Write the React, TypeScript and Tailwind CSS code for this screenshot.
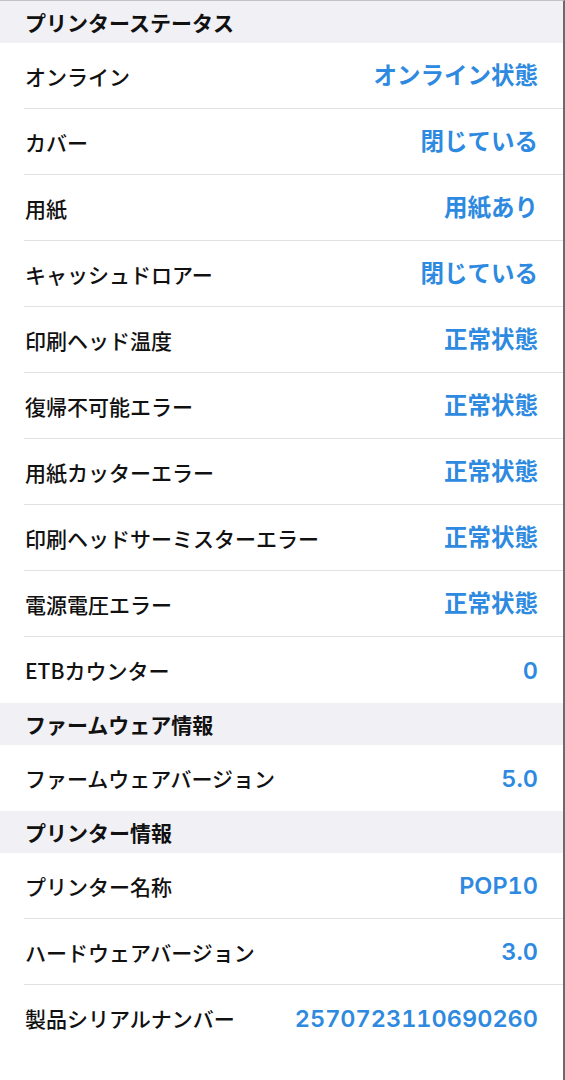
const sections: { title: string; rows: [string, string][] }[] = [
  {
    title: 'プリンターステータス',
    rows: [
      ['オンライン', 'オンライン状態'],
      ['カバー', '閉じている'],
      ['用紙', '用紙あり'],
      ['キャッシュドロアー', '閉じている'],
      ['印刷ヘッド温度', '正常状態'],
      ['復帰不可能エラー', '正常状態'],
      ['用紙カッターエラー', '正常状態'],
      ['印刷ヘッドサーミスターエラー', '正常状態'],
      ['電源電圧エラー', '正常状態'],
      ['ETBカウンター', '0'],
    ],
  },
  {
    title: 'ファームウェア情報',
    rows: [['ファームウェアバージョン', '5.0']],
  },
  {
    title: 'プリンター情報',
    rows: [
      ['プリンター名称', 'POP10'],
      ['ハードウェアバージョン', '3.0'],
      ['製品シリアルナンバー', '2570723110690260'],
    ],
  },
];

export default function App() {
  return (
    <div className="w-[565px] h-[1080px] bg-white border-t border-t-[#c4c4c8] border-r-2 border-r-[#6b6b6b] overflow-hidden font-['Noto_Sans_CJK_JP',sans-serif] text-[#111]">
      {sections.map(s => (
        <div key={s.title}>
          <div className="h-[42px] bg-[#f0f0f5] flex items-center pl-[25px] text-[21px] font-bold leading-none">
            {s.title}
          </div>
          {s.rows.map(([label, value], i) => (
            <div key={label} className="pl-[24px] bg-white">
              <div className={'h-[66px] flex items-center justify-between pr-[25px] ' + (i < s.rows.length - 1 ? 'border-b border-[#e2e2e6]' : '')}>
                <span className="pl-px pt-px text-[21px] font-medium leading-none">{label}</span>
                <span className="pt-px text-[23.5px] font-semibold leading-none text-[#2d8ae0] tabular-nums font-['Inter','Noto_Sans_CJK_JP',sans-serif]">
                  {value}
                </span>
              </div>
            </div>
          ))}
        </div>
      ))}
    </div>
  );
}
